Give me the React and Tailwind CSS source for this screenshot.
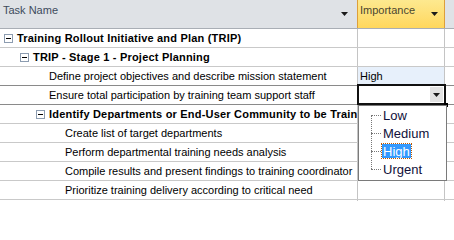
const rows = [
  { level: 0, bold: true, toggle: true, text: "Training Rollout Initiative and Plan (TRIP)" },
  { level: 1, bold: true, toggle: true, text: "TRIP - Stage 1 - Project Planning" },
  { level: 2, text: "Define project objectives and describe mission statement", importance: "High" },
  { level: 2, text: "Ensure total participation by training team support staff", editing: true },
  { level: 2, bold: true, toggle: true, text: "Identify Departments or End-User Community to be Trained" },
  { level: 3, text: "Create list of target departments" },
  { level: 3, text: "Perform departmental training needs analysis" },
  { level: 3, text: "Compile results and present findings to training coordinator" },
  { level: 3, text: "Prioritize training delivery according to critical need" },
  { level: 3, text: "" },
];

const indent = ["pl-[4px]", "pl-[20px]", "pl-[36px]", "pl-[52px]"];

const Arrow = () => (
  <svg width="7" height="4" viewBox="0 0 7 4" className="block">
    <path d="M0 0h7L3.5 4z" fill="#1a1a1a" />
  </svg>
);

const Minus = () => (
  <span className="w-[9px] h-[9px] border border-[#8c9cb0] bg-white flex items-center justify-center mr-[4px] shrink-0">
    <span className="w-[5px] h-px bg-black" />
  </span>
);

const Row = ({ row, i }) => {
  const dark = i === 2 || i === 3;
  return (
    <div className={`flex h-[19px] border-b ${dark ? "border-[#8a8a8a]" : "border-[#c9c9c9]"}`}>
      <div className={`w-[357px] shrink-0 flex items-center overflow-hidden whitespace-nowrap ${indent[row.level]} ${row.toggle ? "" : "pl-[13px]"}`}>
        {row.toggle ? <Minus /> : <span className="w-[13px] shrink-0" />}
        <span className={row.bold ? "font-bold text-black tracking-[0.2px]" : "text-black"}>{row.text}</span>
      </div>
      <div className={`w-[87px] shrink-0 border-l border-[#c4c4c4] relative flex items-center pl-[2px] ${row.importance ? "bg-[#e7f0fb]" : "bg-white"}`}>
        {row.importance}
        {row.editing && (
          <div className="absolute left-[-1px] top-[-2px] w-[89px] h-[21px] border-2 border-[#111] bg-white flex justify-end items-stretch p-px">
            <div className="w-[13px] bg-[#e2e2e2] flex items-center justify-center">
              <Arrow />
            </div>
            <span className="absolute right-[-4px] bottom-[-4px] w-[4px] h-[4px] bg-black" />
          </div>
        )}
      </div>
      <div className="flex-1 border-l border-[#c4c4c4] bg-white" />
    </div>
  );
};

const items = ["Low", "Medium", "High", "Urgent"];

export default function App() {
  return (
    <div
      className="relative w-[454px] h-[201px] overflow-hidden bg-white text-[11px] leading-none"
      style={{ fontFamily: '"Liberation Sans", Arial, sans-serif' }}
    >
      <div className="flex h-[29px] border-b border-[#a9aeb5] bg-[#dfe2e6] text-[#3d4b5c]">
        <div className="w-[357px] shrink-0 flex justify-between pl-[3px] pr-[9px] pt-[5px]">
          <span>Task Name</span>
          <span className="mt-[7px]"><Arrow /></span>
        </div>
        <div className="w-[88px] shrink-0 bg-gradient-to-b from-[#fde98f] to-[#ffd75c] border-x border-[#dd9f3a] flex justify-between pl-[2px] pr-[6px] pt-[5px] text-[#4a4630]">
          <span>Importance</span>
          <span className="mt-[7px]"><Arrow /></span>
        </div>
        <div className="flex-1" />
      </div>

      {rows.map((row, i) => (
        <Row key={i} row={row} i={i} />
      ))}

      {/* dropdown list */}
      <div className="absolute left-[358px] top-[105px] w-[89px] h-[76px] border border-[#7a7a7a] bg-white text-[13px] text-[#10103a]">
        <div className="absolute left-[12px] top-[9px] h-[54px] border-l border-dotted border-[#777]" />
        <div className="flex flex-col">
          {items.map((it) => (
            <div key={it} className="h-[18px] flex items-center">
              <span className="w-[10px] ml-[12px] border-t border-dotted border-[#777]" />
              <span
                className={
                  it === "High"
                    ? "ml-[1px] px-px h-[14px] flex items-center bg-[#3399ff] text-white outline-1 outline-dotted outline-[#c05a00]"
                    : "ml-[2px]"
                }
              >
                {it}
              </span>
            </div>
          ))}
        </div>
      </div>
    </div>
  );
}
